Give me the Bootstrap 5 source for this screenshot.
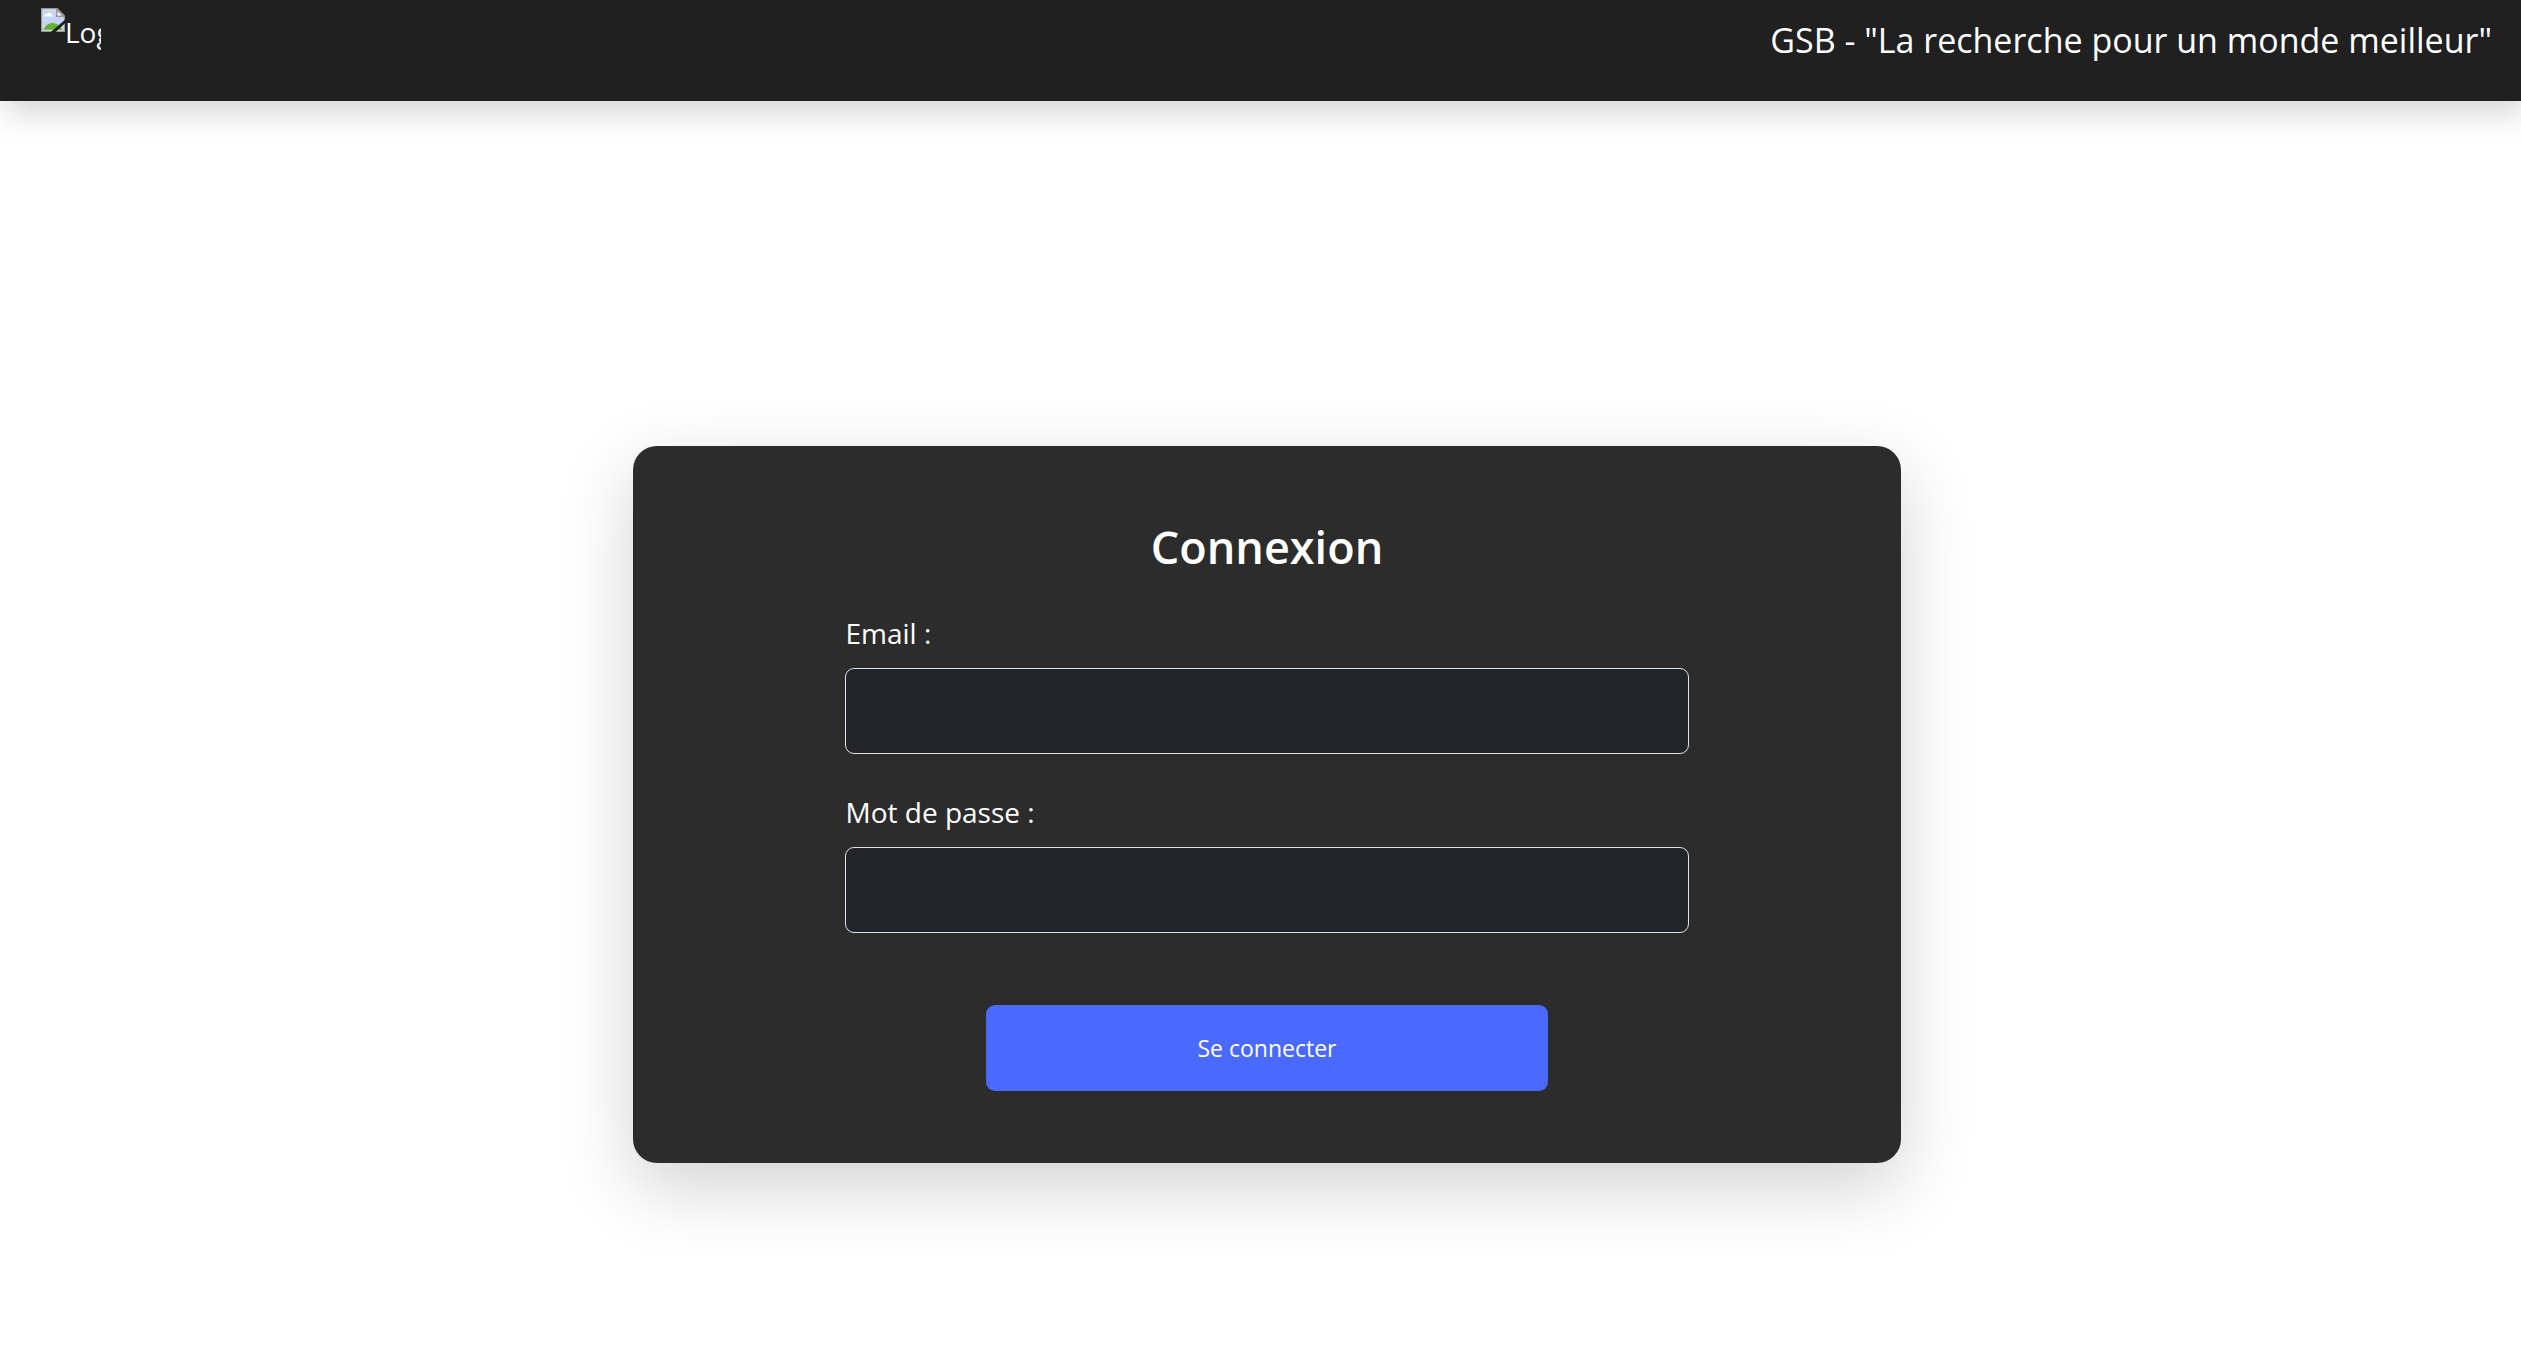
<!DOCTYPE html>
<html lang="fr">
<head>
<meta charset="utf-8">
<meta name="viewport" content="width=device-width, initial-scale=1">
<title>GSB - Connexion</title>
<link href="https://cdn.jsdelivr.net/npm/bootstrap@5.3.0/dist/css/bootstrap.min.css" rel="stylesheet">
<style>
  :root { font-size: 24px; }
  body { font-family: "Open Sans", "Noto Sans", sans-serif; background: #fff; }
  .site-header { background: #202020; color: #fff; height: 101px; padding: 0 29px 0 41px; box-shadow: 5px 12px 30px rgba(0, 0, 0, .17); }
  .logo-box { width: 60px; margin-top: 8px; overflow: hidden; font-size: 28px; line-height: 48px; white-space: nowrap; }
  .logo-box svg { width: 24px; height: 24px; flex: none; }
  .slogan { font-size: 34px; line-height: 54px; margin-top: 13px; }
  .login-area { padding: 345px 0 72px 13px; }
  .login-panel { width: 50.55%; background: #2c2c2c; color: #fff; border-radius: 24px; box-shadow: 0 24px 72px rgba(0, 0, 0, .18); }
  .login-form { width: 66.5%; }
  .login-title { font-size: 45px; line-height: 57px; font-weight: 600; }
  .login-form .form-label { font-size: 28px; line-height: 45px; }
  .login-form .form-control { height: 86px; font-size: 28px; background: #212529; border-color: #dee2e6; color: #fff; border-radius: 9px; }
  .login-btn { width: 66.6667%; height: 86px; font-size: 23px; background: #4a69ff; color: #fff; border: 0; border-radius: 9px; }
  .login-btn:hover { background: #3a59ef; color: #fff; }
</style>
</head>
<body class="min-vh-100">
<header class="site-header d-flex justify-content-between align-items-start">
  <a href="#" class="logo-box d-flex align-items-start text-white text-decoration-none" aria-label="Logo">
    <svg viewBox="0 0 16 16" aria-hidden="true">
      <path d="M0 0H11L16 5V16H0Z" fill="#999"/>
      <path d="M1 1H10.500L15 5.500V15H1Z" fill="#fff"/>
      <path d="M1.500 1.500H10.500V5.500H14.500V14.500H1.500Z" fill="#c3d4f6"/>
      <path d="M2.300 5.700C2 4.300 3.400 4 4 4C4.300 2.600 6.400 2.600 6.700 4C8 4 8.200 5.700 7.500 5.700Z" fill="#fff"/>
      <path d="M1.500 14.500C3 11.500 5 10 7.500 10C9.800 10 12.800 11.700 14.500 14.500Z" fill="#62b22d"/>
      <path d="M10.500 1V5.500H15Z" fill="#fff" stroke="#999"/>
      <path d="M6.500 16L16 7.800V10.200L9.800 16Z" fill="#202020"/>
    </svg>
    <span>Logo</span>
  </a>
  <div class="slogan">GSB - "La recherche pour un monde meilleur"</div>
</header>
<main class="login-area d-flex justify-content-center">
  <section class="login-panel py-5 d-flex justify-content-center">
    <form class="login-form">
      <h1 class="login-title text-center mb-4">Connexion</h1>
      <div class="mb-4">
        <label class="form-label" for="email">Email :</label>
        <input class="form-control" type="email" id="email" name="email">
      </div>
      <div class="mb-5">
        <label class="form-label" for="password">Mot de passe :</label>
        <input class="form-control" type="password" id="password" name="password">
      </div>
      <button type="submit" class="btn login-btn d-block mx-auto">Se connecter</button>
    </form>
  </section>
</main>
<script src="https://cdn.jsdelivr.net/npm/bootstrap@5.3.0/dist/js/bootstrap.bundle.min.js"></script>
</body>
</html>
